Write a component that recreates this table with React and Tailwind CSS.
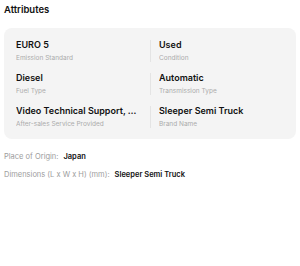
import React from 'react'

const attrs = [
  ['EURO 5', 'Emission Standard'],
  ['Used', 'Condition'],
  ['Diesel', 'Fuel Type'],
  ['Automatic', 'Transmission Type'],
  ['Video Technical Support, Online Support', 'After-sales Service Provided'],
  ['Sleeper Semi Truck', 'Brand Name'],
]

export default function App() {
  return (
    <div className="w-[300px] h-[266px] bg-white px-1 pt-[4px]" style={{ fontFamily: 'Inter, "Noto Sans", sans-serif' }}>
      <h2 className="text-[9.5px] leading-[12px] font-semibold text-[#111]">Attributes</h2>

      <div className="mt-[12px] rounded-lg bg-[#f4f4f4] pl-3 pr-3 pt-[12px] pb-[11px] grid grid-cols-2 gap-y-[11px]">
        {attrs.map(([value, label], i) => (
          <div
            key={i}
            className={
              i % 2 === 1
                ? 'h-[22px] border-l border-[#e4e4e4] pl-2 min-w-0'
                : 'h-[22px] pr-2 min-w-0'
            }
          >
            <div className="text-[9px] leading-[10px] font-semibold text-[#111] truncate">{value}</div>
            <div className="mt-[4px] text-[6.5px] leading-[8px] text-[#ababab] truncate">{label}</div>
          </div>
        ))}
      </div>

      <div className="mt-[13px] flex flex-col gap-[8px] text-[7.5px] leading-[10px]">
        <div className="flex gap-[5px]">
          <span className="text-[#9c9c9c]">Place of Origin:</span>
          <span className="font-semibold text-[#111]">Japan</span>
        </div>
        <div className="flex gap-[5px]">
          <span className="text-[#9c9c9c]">Dimensions (L x W x H) (mm):</span>
          <span className="font-semibold text-[#111]">Sleeper Semi Truck</span>
        </div>
      </div>
    </div>
  )
}
